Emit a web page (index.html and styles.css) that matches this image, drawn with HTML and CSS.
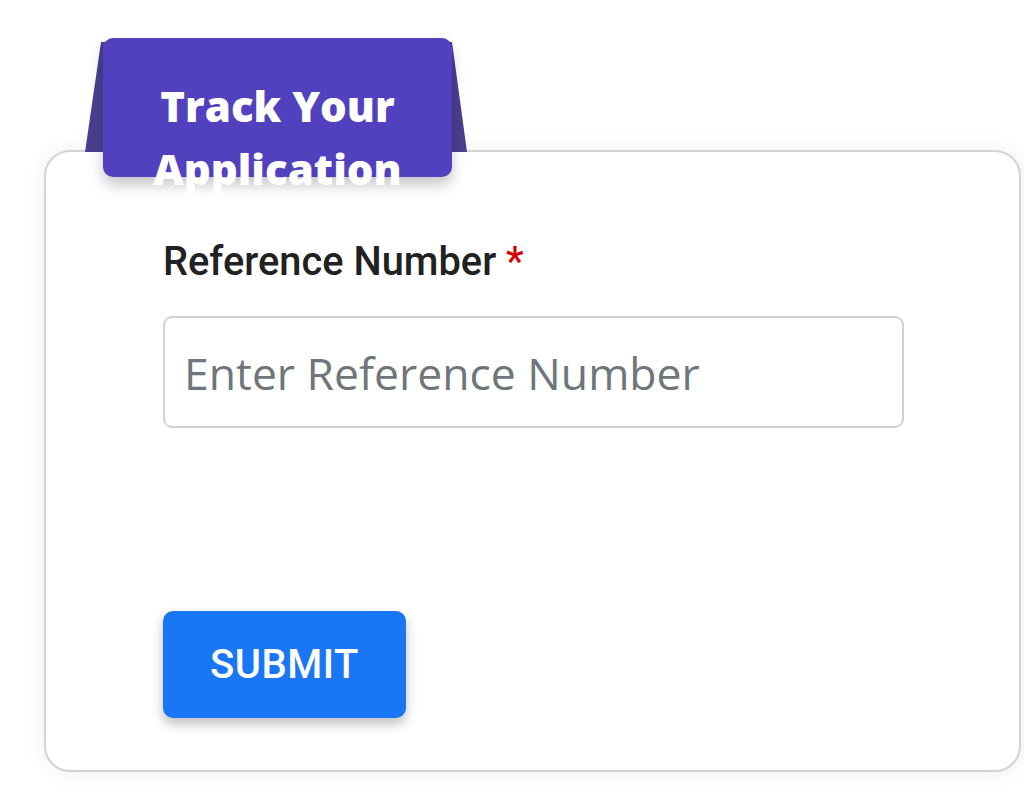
FILE: index.html
```html
<!DOCTYPE html>
<html lang="en">
<head>
<meta charset="utf-8">
<title>Track Your Application</title>
<link rel="stylesheet" href="styles.css">
</head>
<body>
<main class="page">
  <section class="card">
    <div class="tab">
      <div class="tab-face">
        <h1 class="tab-title">Track Your Application</h1>
      </div>
    </div>
    <form class="track-form">
      <label class="field-label" for="ref">Reference Number <span class="req">*</span></label>
      <input class="field-input" id="ref" type="text" placeholder="Enter Reference Number">
      <button class="submit-btn" type="button">SUBMIT</button>
    </form>
  </section>
</main>
</body>
</html>
```

FILE: styles.css
```css
html, body {
  margin: 0;
  padding: 0;
  background: #ffffff;
}

.page {
  padding: 150px 3px 21px 44px;
}

.card {
  position: relative;
  box-sizing: border-box;
  width: 977px;
  height: 622px;
  background: #ffffff;
  border: 2px solid #d4d4d4;
  border-radius: 26px;
  box-shadow: 0 0 22px rgba(0, 0, 0, 0.07);
}

/* folded ribbon tab sitting on the card's top edge */
.tab {
  position: absolute;
  left: 39px;
  top: -110px;
  width: 382px;
  height: 110px;
}

.tab::before {
  content: "";
  position: absolute;
  inset: 0;
  background: #4a3f90;
  clip-path: polygon(16px 0, 367px 0, 382px 100%, 0 100%);
}

.tab-face {
  position: absolute;
  left: 18px;
  top: -4px;
  width: 349px;
  height: 139px;
  background: #5141bf;
  border-radius: 10px;
  box-shadow: 0 8px 14px rgba(0, 0, 0, 0.22);
}

.tab-title {
  margin: 0;
  padding-top: 36px;
  color: #ffffff;
  font-family: "Open Sans", "Lato", sans-serif;
  font-weight: 800;
  font-size: 42px;
  line-height: 63px;
  text-align: center;
}

.track-form {
  display: flex;
  flex-direction: column;
  align-items: flex-start;
  padding: 90px 0 0 117px;
}

.field-label {
  font-family: "Roboto", sans-serif;
  font-weight: 500;
  font-size: 39.8px;
  line-height: 40px;
  color: #212121;
}

.req {
  color: #d50000;
}

.field-input {
  box-sizing: border-box;
  margin-top: 34px;
  width: 741px;
  height: 112px;
  padding: 0 19px;
  border: 2px solid #d2d2d2;
  border-radius: 9px;
  font-family: "Open Sans", sans-serif;
  font-size: 44.5px;
  color: #333;
  background: #fff;
  outline: none;
}

.field-input::placeholder {
  color: #6f767b;
}

.submit-btn {
  margin-top: 183px;
  width: 243px;
  height: 107px;
  border: none;
  border-radius: 10px;
  background: #1976f5;
  color: #ffffff;
  font-family: "Roboto", sans-serif;
  font-weight: 500;
  font-size: 40px;
  letter-spacing: 0.5px;
  box-shadow: 0 6px 12px rgba(0, 0, 0, 0.25);
}
```
